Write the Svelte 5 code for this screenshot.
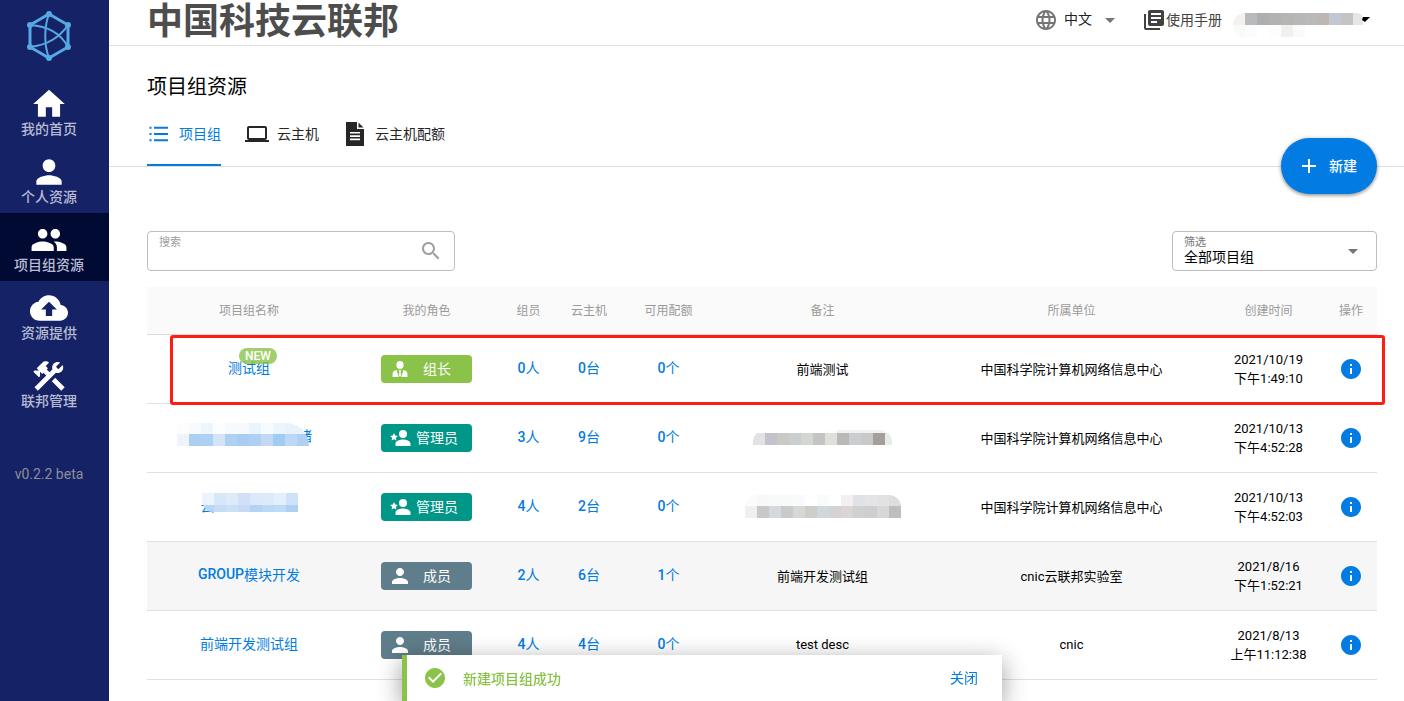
<script>
  const icons = {
    home: 'M10 20v-6h4v6h5v-8h3L12 3 2 12h3v8z',
    person: 'M12 12c2.21 0 4-1.79 4-4s-1.79-4-4-4-4 1.79-4 4 1.79 4 4 4zm0 2c-2.67 0-8 1.34-8 4v2h16v-2c0-2.66-5.33-4-8-4z',
    people:
      'M16 11c1.66 0 2.99-1.34 2.99-3S17.66 5 16 5c-1.66 0-3 1.34-3 3s1.34 3 3 3zm-8 0c1.66 0 2.99-1.34 2.99-3S9.66 5 8 5C6.34 5 5 6.34 5 8s1.34 3 3 3zm0 2c-2.33 0-7 1.17-7 3.5V19h14v-2.5c0-2.33-4.67-3.5-7-3.5zm8 0c-.29 0-.62.02-.97.05 1.16.84 1.97 1.97 1.97 3.45V19h6v-2.5c0-2.33-4.67-3.5-7-3.5z',
    cloud:
      'M19.35 10.04C18.67 6.59 15.64 4 12 4 9.11 4 6.6 5.64 5.35 8.04 2.34 8.36 0 10.91 0 14c0 3.31 2.69 6 6 6h13c2.76 0 5-2.24 5-5 0-2.64-2.05-4.78-4.65-4.96zM14 13v4h-4v-4H7l5-5 5 5h-3z',
    tools:
      'M13.78 15.3L19.78 21.3L21.89 19.14L15.89 13.14L13.78 15.3M17.5 10.1C17.11 10.1 16.69 10.05 16.36 9.91L4.97 21.25L2.86 19.14L10.27 11.74L8.5 9.96L7.78 10.66L6.33 9.25V12.11L5.63 12.81L2.11 9.25L2.81 8.55H5.62L4.22 7.14L7.78 3.58C8.95 2.41 10.83 2.41 12 3.58L9.89 5.74L11.3 7.14L10.59 7.85L12.38 9.63L14.2 7.75C14.06 7.42 14 7 14 6.63C14 4.66 15.56 3.11 17.5 3.11C18.09 3.11 18.61 3.25 19.08 3.53L16.41 6.2L17.91 7.7L20.58 5.03C20.86 5.5 21 6 21 6.63C21 8.55 19.45 10.1 17.5 10.1Z',
    list: 'M2.5 4.8h2v2h-2zM2.5 11h2v2h-2zM2.5 17.2h2v2h-2zM7 4.8h14v2H7zM7 11h14v2H7zM7 17.2h14v2H7z',
    laptop: 'M20 18c1.100 0 2-.9 2-2V6c0-1.100-.9-2-2-2H4c-1.100 0-2 .9-2 2v10c0 1.100.9 2 2 2H0v2h24v-2h-4zM4 6h16v10H4V6z',
    doc: 'M3 0h11v7h7v17H3zM15.500 0.500L20.500 5.500H15.500zM7 10v1.600h10V10zM7 13.300v1.600h10v-1.600zM7 16.600v1.600h10v-1.600z',
    globe:
      'M11.99 2C6.47 2 2 6.48 2 12s4.47 10 9.99 10C17.52 22 22 17.52 22 12S17.52 2 11.99 2zm6.93 6h-2.95c-.32-1.25-.78-2.45-1.38-3.56 1.84.63 3.37 1.91 4.33 3.56zM12 4.04c.83 1.2 1.48 2.53 1.91 3.96h-3.82c.43-1.43 1.08-2.76 1.91-3.96zM4.26 14C4.1 13.36 4 12.69 4 12s.1-1.36.26-2h3.38c-.08.66-.14 1.32-.14 2 0 .68.06 1.34.14 2H4.26zm.82 2h2.95c.32 1.25.78 2.45 1.38 3.56-1.84-.63-3.37-1.9-4.33-3.56zm2.95-8H5.080c.96-1.660 2.490-2.930 4.330-3.560C8.810 5.550 8.350 6.750 8.030 8zM12 19.960c-.83-1.200-1.480-2.530-1.910-3.960h3.820c-.43 1.430-1.080 2.760-1.910 3.960zM14.340 14H9.660c-.09-.66-.16-1.320-.16-2 0-.68.07-1.350.16-2h4.680c.09.650.16 1.320.16 2 0 .68-.07 1.340-.16 2zm.25 5.560c.6-1.110 1.060-2.310 1.380-3.560h2.950c-.96 1.650-2.490 2.930-4.330 3.560zM16.360 14c.08-.66.14-1.320.14-2 0-.68-.06-1.340-.14-2h3.380c.16.640.26 1.310.26 2s-.1 1.360-.26 2h-3.380z',
    book: 'M4 6H2v14c0 1.100.9 2 2 2h14v-2H4V6zm16-4H8c-1.100 0-2 .9-2 2v12c0 1.100.9 2 2 2h12c1.100 0 2-.9 2-2V4c0-1.100-.9-2-2-2zm-1 9H9V9h10v2zm-4 4H9v-2h6v2zm4-8H9V5h10v2z',
    plus: 'M19 13h-6v6h-2v-6H5v-2h6V5h2v6h6v2z',
    search:
      'M15.500 14h-.79l-.28-.27C15.410 12.590 16 11.110 16 9.500 16 5.910 13.090 3 9.500 3S3 5.910 3 9.500 5.910 16 9.500 16c1.610 0 3.090-.59 4.230-1.570l.27.28v.79l5 4.990L20.490 19l-4.990-5zm-6 0C7.010 14 5 11.990 5 9.500S7.010 5 9.500 5 14 7.010 14 9.500 11.990 14 9.500 14z',
    arrow: 'M7 10l5 5 5-5z',
    info: 'M12 2C6.480 2 2 6.480 2 12s4.480 10 10 10 10-4.480 10-10S17.520 2 12 2zm1 15h-2v-6h2v6zm0-8h-2V7h2v2z',
    check: 'M12 2C6.480 2 2 6.480 2 12s4.480 10 10 10 10-4.480 10-10S17.520 2 12 2zm-2 15l-5-5 1.410-1.410L10 14.170l7.590-7.590L19 8l-9 9z',
    leader:
      'M12 4a3.600 3.900 0 0 0 0 7.800a3.600 3.900 0 0 0 0-7.800zM8.600 13C6 13.300 4.600 15 4.600 17V20H10.600zM15.400 13C18 13.300 19.400 15 19.400 17V20H13.400zM10.700 13h2.600l-.8 1.700.7 3.800-1.200 1.500-1.200-1.500.7-3.800z',
    admin:
      'M15 4a4 4 0 0 0 0 8a4 4 0 0 0 0-8zM15 13.500c-2.700 0-7.500 1.400-7.500 4V20h15v-2.500c0-2.600-4.800-4-7.500-4zM6 7l1.200 2.500 2.700.4-2 1.900.5 2.700L6 13.200l-2.400 1.300.5-2.700-2-1.900 2.700-.4z'
  }

  const menu = [
    { label: '我的首页', icon: 'home' },
    { label: '个人资源', icon: 'person' },
    { label: '项目组资源', icon: 'people' },
    { label: '资源提供', icon: 'cloud' },
    { label: '联邦管理', icon: 'tools' }
  ]

  const tabs = [
    { label: '项目组', icon: 'list' },
    { label: '云主机', icon: 'laptop' },
    { label: '云主机配额', icon: 'doc' }
  ]

  const columns = [
    { key: 'name', label: '项目组名称' },
    { key: 'role', label: '我的角色' },
    { key: 'member', label: '组员' },
    { key: 'server', label: '云主机' },
    { key: 'quota', label: '可用配额' },
    { key: 'desc', label: '备注' },
    { key: 'company', label: '所属单位' },
    { key: 'time', label: '创建时间' },
    { key: 'operation', label: '操作' }
  ]

  const roles = {
    leader: { label: '组长', icon: 'leader' },
    admin: { label: '管理员', icon: 'admin' },
    member: { label: '成员', icon: 'person' }
  }

  // masked values: rows of 12px colour cells
  const userMask = {
    width: 130,
    height: 24,
    rows: [
      { y: 0, h: 12, cells: ['#f5f1ef', '#b9babc', '#adaeb0', '#b2b2b0', '#b5b5b3', '#b8b7b6', '#b9b9b9', '#bdb6b3', '#c1c8d1', '#c4c4c3', '#e3e7e6', '#e9e6e3'] },
      { y: 12, h: 12, cells: ['#fafafa', '#fafcfd', '#fff', '#fdfdfd', '#f0f0f0', '#f9fafa'] }
    ]
  }

  const rows = [
    {
      name: '测试组', isNew: true, role: 'leader', member: 0, server: 0, quota: 0,
      desc: '前端测试', company: '中国科学院计算机网络信息中心', date: '2021/10/19', time: '下午1:49:10'
    },
    {
      name: '绪',
      maskClass: 'mask-before',
      nameMask: {
        width: 132,
        height: 23,
        rows: [
          { y: 0, h: 11, cells: ['#fdfdfd', '#f7fbfe', '#eef6fd', '#fcfdfe', '#f6faff', '#f6faff', '#eaf4fd', '#f6fbff', '#ecf5fd', '#e6f2fc', '#e8f3fc'] },
          { y: 11, h: 12, cells: ['#eff4fc', '#aacff3', '#aed0f3', '#d3e3f8', '#aed0f3', '#a9ccf2', '#add0f3', '#c4d8f6', '#a0cbf2', '#bcd8f5', '#b0cff2'] }
        ]
      },
      role: 'admin', member: 3, server: 9, quota: 0,
      descMask: {
        width: 139,
        height: 15,
        rows: [
          { y: 0, h: 3, cells: ['#fff', '#fff', '#fff', '#fff', '#fff', '#fff', '#fdfdfd', '#f2f2f3', '#f2f2f3', '#f2f2f3', '#f2f2f3', '#fafafa'] },
          { y: 3, h: 12, cells: ['#e2e2e2', '#c2c3cc', '#c9c9c6', '#c8cfcd', '#d3d6d1', '#c4c4c4', '#dfe0dc', '#b9b9b8', '#cccdd1', '#c8c9ca', '#a59f99', '#e7ebea'] }
        ]
      },
      company: '中国科学院计算机网络信息中心', date: '2021/10/13', time: '下午4:52:28'
    },
    {
      name: '云',
      maskClass: 'mask-after',
      nameMask: {
        width: 96,
        height: 19,
        rows: [
          { y: 0, h: 12, cells: ['#ebf4fc', '#d8e6f9', '#dfeaf9', '#d1e0f8', '#dbe9fa', '#dceafa', '#e3effc', '#d0e2f8'] },
          { y: 12, h: 7, cells: ['#bad6f5', '#c6dbf6', '#cbdff7', '#c5daf5', '#b4d2f4', '#b9d9f6', '#bddaf7', '#aed0f4'] }
        ]
      },
      role: 'admin', member: 4, server: 2, quota: 0,
      descMask: {
        width: 156,
        height: 23,
        rows: [
          { y: 0, h: 11, cells: ['#fbfbfb', '#f7f8f9', '#f8fafa', '#f8fafa', '#f9fafa', '#fff', '#f9fbfb', '#fff', '#f2f0f1', '#e1e2e5', '#e4e4e6', '#e2e2e2', '#dddedd'] },
          { y: 11, h: 12, cells: ['#eef0f0', '#cac7c8', '#d6d9dc', '#cacace', '#d6d8d8', '#cfcdca', '#cfd8dc', '#d4d2d4', '#dad5d3', '#cfd0d2', '#cdced0', '#d6d8d3', '#bfbdc0'] }
        ]
      },
      company: '中国科学院计算机网络信息中心', date: '2021/10/13', time: '下午4:52:03'
    },
    {
      prefix: 'GROUP', name: '模块开发', role: 'member', member: 2, server: 6, quota: 1,
      desc: '前端开发测试组', company: 'cnic云联邦实验室', date: '2021/8/16', time: '下午1:52:21', hover: true
    },
    {
      name: '前端开发测试组', role: 'member', member: 4, server: 4, quota: 0,
      desc: 'test desc', company: 'cnic', date: '2021/8/13', time: '上午11:12:38'
    }
  ]

  let activeMenu = $state('项目组资源')
  let activeTab = $state('项目组')
  let keyword = $state('')
  let filter = $state('all')
  let lang = $state('zh')
  let showNotify = $state(true)
</script>

{#snippet icon(name)}
  <svg class="icon" viewBox="0 0 24 24" aria-hidden="true">
    <path d={icons[name]} fill-rule="evenodd" />
  </svg>
{/snippet}

{#snippet mask(m, extra)}
  <svg class="mask {extra}" width={m.width} height={m.height} aria-hidden="true">
    {#each m.rows as r}
      {#each r.cells as c, i}
        <rect x={i * 12} y={r.y} width="12" height={r.h} fill={c} shape-rendering="crispEdges" />
      {/each}
    {/each}
  </svg>
{/snippet}

<div class="layout">
  <aside class="sidebar">
    <svg class="logo" viewBox="0 0 50 54" aria-hidden="true">
      <g fill="none" stroke="#56a9e2">
        <path stroke-width="3" d="M25 5L44 16V38L25 49L6 38V16Z" />
        <path stroke-width="2" d="M25 5C20 18 20 36 25 49" />
        <path stroke-width="2" d="M6 16C24 17 37 25 44 38" />
        <path stroke-width="2" d="M44 16C36 28 24 36 6 38" />
      </g>
      <g fill="#56a9e2">
        <circle cx="25" cy="5" r="3" />
        <circle cx="44" cy="16" r="3" />
        <circle cx="44" cy="38" r="3" />
        <circle cx="25" cy="49" r="3" />
        <circle cx="6" cy="38" r="3" />
        <circle cx="6" cy="16" r="3" />
      </g>
    </svg>
    <nav>
      {#each menu as item}
        <a
          href="#{item.icon}"
          class="menu-item"
          class:active={activeMenu === item.label}
          onclick={() => (activeMenu = item.label)}
        >
          {@render icon(item.icon)}
          <span>{item.label}</span>
        </a>
      {/each}
    </nav>
    <div class="version">v0.2.2 beta</div>
  </aside>

  <div class="page">
    <header class="topbar">
      <div class="brand">中国科技云联邦</div>
      <div class="topbar-right">
        <div class="lang">
          {@render icon('globe')}
          <select bind:value={lang} aria-label="语言">
            <option value="zh">中文</option>
            <option value="en">English</option>
          </select>
          {@render icon('arrow')}
        </div>
        <a class="manual" href="#manual">{@render icon('book')}<span>使用手册</span></a>
        <button class="user" aria-label="用户">
          {@render mask(userMask, 'mask-user')}
          <svg class="user-arrow" viewBox="0 0 8 5" aria-hidden="true"><path d="M1 0H8L3 5L0 3Z" /></svg>
        </button>
      </div>
    </header>

    <section class="heading">
      <h1>项目组资源</h1>
      <div class="tabs" role="tablist">
        {#each tabs as tab}
          <button
            class="tab"
            class:active={activeTab === tab.label}
            role="tab"
            aria-selected={activeTab === tab.label}
            onclick={() => (activeTab = tab.label)}
          >
            {@render icon(tab.icon)}
            <span>{tab.label}</span>
          </button>
        {/each}
      </div>
      <button class="create">{@render icon('plus')}<span>新建</span></button>
    </section>

    <main>
      <div class="toolbar">
        <div class="field search">
          <div class="field-body">
            <label for="search">搜索</label>
            <input id="search" type="text" bind:value={keyword} />
          </div>
          {@render icon('search')}
        </div>
        <div class="field filter">
          <div class="field-body">
            <label for="filter">筛选</label>
            <select id="filter" bind:value={filter}>
              <option value="all">全部项目组</option>
              <option value="owner">我组建的</option>
            </select>
          </div>
          {@render icon('arrow')}
        </div>
      </div>

      <div class="table-wrap">
        <table>
          <thead>
            <tr>
              {#each columns as col}
                <th class="col-{col.key}">{col.label}</th>
              {/each}
            </tr>
          </thead>
          <tbody>
            {#each rows as row}
              <tr class:hover={row.hover}>
                <td class="link">
                  <a class="name" href="#group">
                    {#if row.nameMask}{@render mask(row.nameMask, row.maskClass)}{/if}
                    {#if row.prefix}<b>{row.prefix}</b>{/if}
                    <span>{row.name}</span>
                    {#if row.isNew}<em class="badge">NEW</em>{/if}
                  </a>
                </td>
                <td>
                  <div class="role {row.role}">
                    {@render icon(roles[row.role].icon)}
                    <span>{roles[row.role].label}</span>
                  </div>
                </td>
                <td class="link"><a href="#member"><b>{row.member}</b>人</a></td>
                <td class="link"><a href="#server"><b>{row.server}</b>台</a></td>
                <td class="link"><a href="#quota"><b>{row.quota}</b>个</a></td>
                <td class="text">
                  {#if row.descMask}{@render mask(row.descMask, 'mask-desc')}{:else}{row.desc}{/if}
                </td>
                <td class="text">{row.company}</td>
                <td class="time">{row.date}<br />{row.time}</td>
                <td><button class="info" aria-label="详情">{@render icon('info')}</button></td>
              </tr>
            {/each}
          </tbody>
        </table>
        <div class="highlight"></div>
      </div>
    </main>
  </div>
</div>

{#if showNotify}
  <div class="notify" role="status">
    {@render icon('check')}
    <span>新建项目组成功</span>
    <button onclick={() => (showNotify = false)}>关闭</button>
  </div>
{/if}

<style>
  :global(body) {
    font-family: Roboto, 'Noto Sans CJK SC', sans-serif;
    font-size: 14px;
    color: #000;
    background: #fff;
  }

  * {
    box-sizing: border-box;
  }

  button,
  input,
  select {
    font: inherit;
    color: inherit;
    border: none;
    background: none;
    padding: 0;
    margin: 0;
    outline: none;
    appearance: none;
  }

  button {
    cursor: pointer;
  }

  a {
    color: #027be3;
    text-decoration: none;
  }

  b {
    font-weight: 500;
  }

  .icon {
    width: 24px;
    height: 24px;
    fill: currentColor;
    flex: none;
    display: block;
  }

  .mask {
    display: block;
    flex: none;
  }

  .layout {
    display: flex;
    min-height: 100vh;
  }

  /* sidebar */
  .sidebar {
    width: 109px;
    flex: none;
    background: #152266;
  }

  .logo {
    display: block;
    width: 50px;
    height: 54px;
    margin: 9px 0 14px 24px;
  }

  .menu-item {
    display: flex;
    flex-direction: column;
    align-items: center;
    height: 68px;
    padding: 8px 11px 0 0;
    color: #fff;
  }

  .menu-item.active {
    background: #000a33;
  }

  .menu-item .icon {
    width: 38px;
    height: 38px;
  }

  .menu-item span {
    font-weight: 500;
    line-height: 12px;
    color: #b8bcd3;
  }

  .version {
    margin-top: 48px;
    padding-right: 11px;
    line-height: 18px;
    text-align: center;
    color: #8e8e96;
  }

  /* top bar */
  .page {
    flex: 1;
    min-width: 0;
  }

  .topbar {
    display: flex;
    justify-content: space-between;
    height: 46px;
    padding: 0 34px 6px 38px;
    border-bottom: 1px solid #e0e0e0;
  }

  .brand {
    font-size: 36px;
    line-height: 44px;
    font-weight: 700;
    color: #4d4d4d;
  }

  .topbar-right {
    display: flex;
    align-items: center;
    color: #424242;
  }

  .topbar-right select,
  .topbar-right span {
    padding-bottom: 2px;
  }

  .lang {
    display: flex;
    align-items: center;
    color: #757575;
  }

  .lang select {
    width: 34px;
    margin-left: 6px;
    color: #212121;
  }

  .manual {
    display: flex;
    align-items: center;
    margin-left: 20px;
    color: #424242;
  }

  .user {
    display: flex;
    align-items: center;
    margin-left: 11px;
  }

  .mask-user {
    border-radius: 12px 6px 6px 12px;
    margin-top: 10px;
  }

  .user-arrow {
    width: 8px;
    height: 5px;
    margin-left: -1px;
  }

  /* heading and tabs */
  .heading {
    position: relative;
    padding: 27px 38px 0;
    border-bottom: 1px solid #e0e0e0;
  }

  h1 {
    margin: 0;
    font-size: 20px;
    line-height: 28px;
    font-weight: 400;
  }

  .tabs {
    display: flex;
    gap: 24px;
  }

  .tab {
    display: flex;
    align-items: center;
    gap: 8px;
    height: 65px;
    padding-top: 2px;
    border-bottom: 2px solid transparent;
    color: #262626;
  }

  .tab span {
    padding-bottom: 2px;
  }

  .tab.active {
    color: #027be3;
    border-color: #027be3;
  }

  .create {
    position: absolute;
    right: 27px;
    bottom: -28px;
    display: flex;
    align-items: center;
    gap: 8px;
    width: 96px;
    height: 56px;
    padding-left: 16px;
    border-radius: 28px;
    background: #027be3;
    color: #fff;
    font-weight: 500;
    box-shadow: 0 1px 4px rgba(0, 0, 0, 0.35), 0 2px 3px rgba(0, 0, 0, 0.15);
  }

  .create span {
    padding-bottom: 2px;
  }

  /* filters */
  main {
    padding: 64px 27px 0 38px;
  }

  .toolbar {
    display: flex;
    justify-content: space-between;
  }

  .field {
    display: flex;
    align-items: center;
    height: 40px;
    padding: 0 11px;
    border: 1px solid #bdbdbd;
    border-radius: 4px;
  }

  .search {
    width: 308px;
    color: #9e9e9e;
  }

  .filter {
    width: 205px;
    color: #757575;
  }

  .field-body {
    flex: 1;
    display: flex;
    flex-direction: column;
  }

  .field label {
    font-size: 11px;
    line-height: 12px;
  }

  .field input,
  .field select {
    height: 16px;
    line-height: 16px;
    color: #000;
  }

  /* table */
  .table-wrap {
    position: relative;
    margin-top: 16px;
  }

  table {
    width: 100%;
    table-layout: fixed;
    border-collapse: separate;
    border-spacing: 0;
    font-size: 13px;
    text-align: center;
  }

  th {
    height: 48px;
    padding: 0 0 2px;
    font-size: 12px;
    font-weight: 400;
    color: #9a9a9a;
    background: #fafafa;
    border-bottom: 1px solid #dcdcdc;
  }

  td {
    height: 69px;
    padding: 0;
    border-bottom: 1px solid #e0e0e0;
  }

  td.text {
    padding-bottom: 2px;
  }

  td.link {
    padding-bottom: 4px;
    font-size: 14px;
  }

  .col-name {
    width: 204px;
  }

  .col-role {
    width: 151px;
  }

  .col-member {
    width: 53px;
  }

  .col-server {
    width: 68px;
  }

  .col-quota {
    width: 91px;
  }

  .col-desc {
    width: 217px;
  }

  .col-company {
    width: 281px;
  }

  .col-time {
    width: 113px;
  }

  .col-operation {
    width: 52px;
  }

  tr.hover td {
    background: #f6f6f6;
  }

  .name {
    position: relative;
    display: inline-flex;
    align-items: center;
  }

  .mask-before {
    position: relative;
    margin: 0 -11px 0 -9px;
    border-radius: 0 24px 0 0;
  }

  .mask-after {
    position: relative;
    order: 1;
    margin: -6px 0 0 -13px;
    border-radius: 0 0 0 12px;
  }

  .mask-desc {
    margin: 0 auto;
    border-radius: 12px 12px 0 0;
  }

  .badge {
    position: absolute;
    left: 11px;
    top: -9px;
    padding: 0 6px;
    border-radius: 8px;
    background: rgba(139, 195, 74, 0.8);
    color: #fff;
    font-size: 12px;
    font-style: normal;
    font-weight: 500;
    line-height: 16px;
  }

  .role {
    display: flex;
    align-items: center;
    gap: 4px;
    width: 91px;
    height: 28px;
    margin: 0 auto;
    padding: 0 14px 0 7px;
    border-radius: 4px;
    color: #fff;
    font-size: 14px;
  }

  .role span {
    flex: 1;
    padding-bottom: 2px;
  }

  .role.leader {
    background: #8bc34a;
  }

  .role.admin {
    background: #009688;
  }

  .role.member {
    background: #607d8b;
  }

  .time {
    line-height: 19px;
  }

  .info {
    display: block;
    margin: 0 auto;
    color: #027be3;
  }

  .highlight {
    position: absolute;
    top: 48px;
    left: 23px;
    right: -8px;
    height: 70px;
    border: 3px solid #ff1d12;
    border-radius: 3px;
    pointer-events: none;
  }

  /* notification */
  .notify {
    position: fixed;
    left: 50%;
    bottom: 0;
    transform: translateX(-50%);
    display: flex;
    align-items: center;
    width: 600px;
    height: 46px;
    padding: 0 24px 0 16px;
    border-left: 5px solid #8bc34a;
    background: #fff;
    color: #8bc34a;
    font-weight: 500;
    box-shadow: 0 6px 24px rgba(0, 0, 0, 0.4);
  }

  .notify span {
    flex: 1;
    margin-left: 16px;
  }

  .notify button {
    padding-bottom: 2px;
    color: #027be3;
    font-weight: 400;
  }
</style>
